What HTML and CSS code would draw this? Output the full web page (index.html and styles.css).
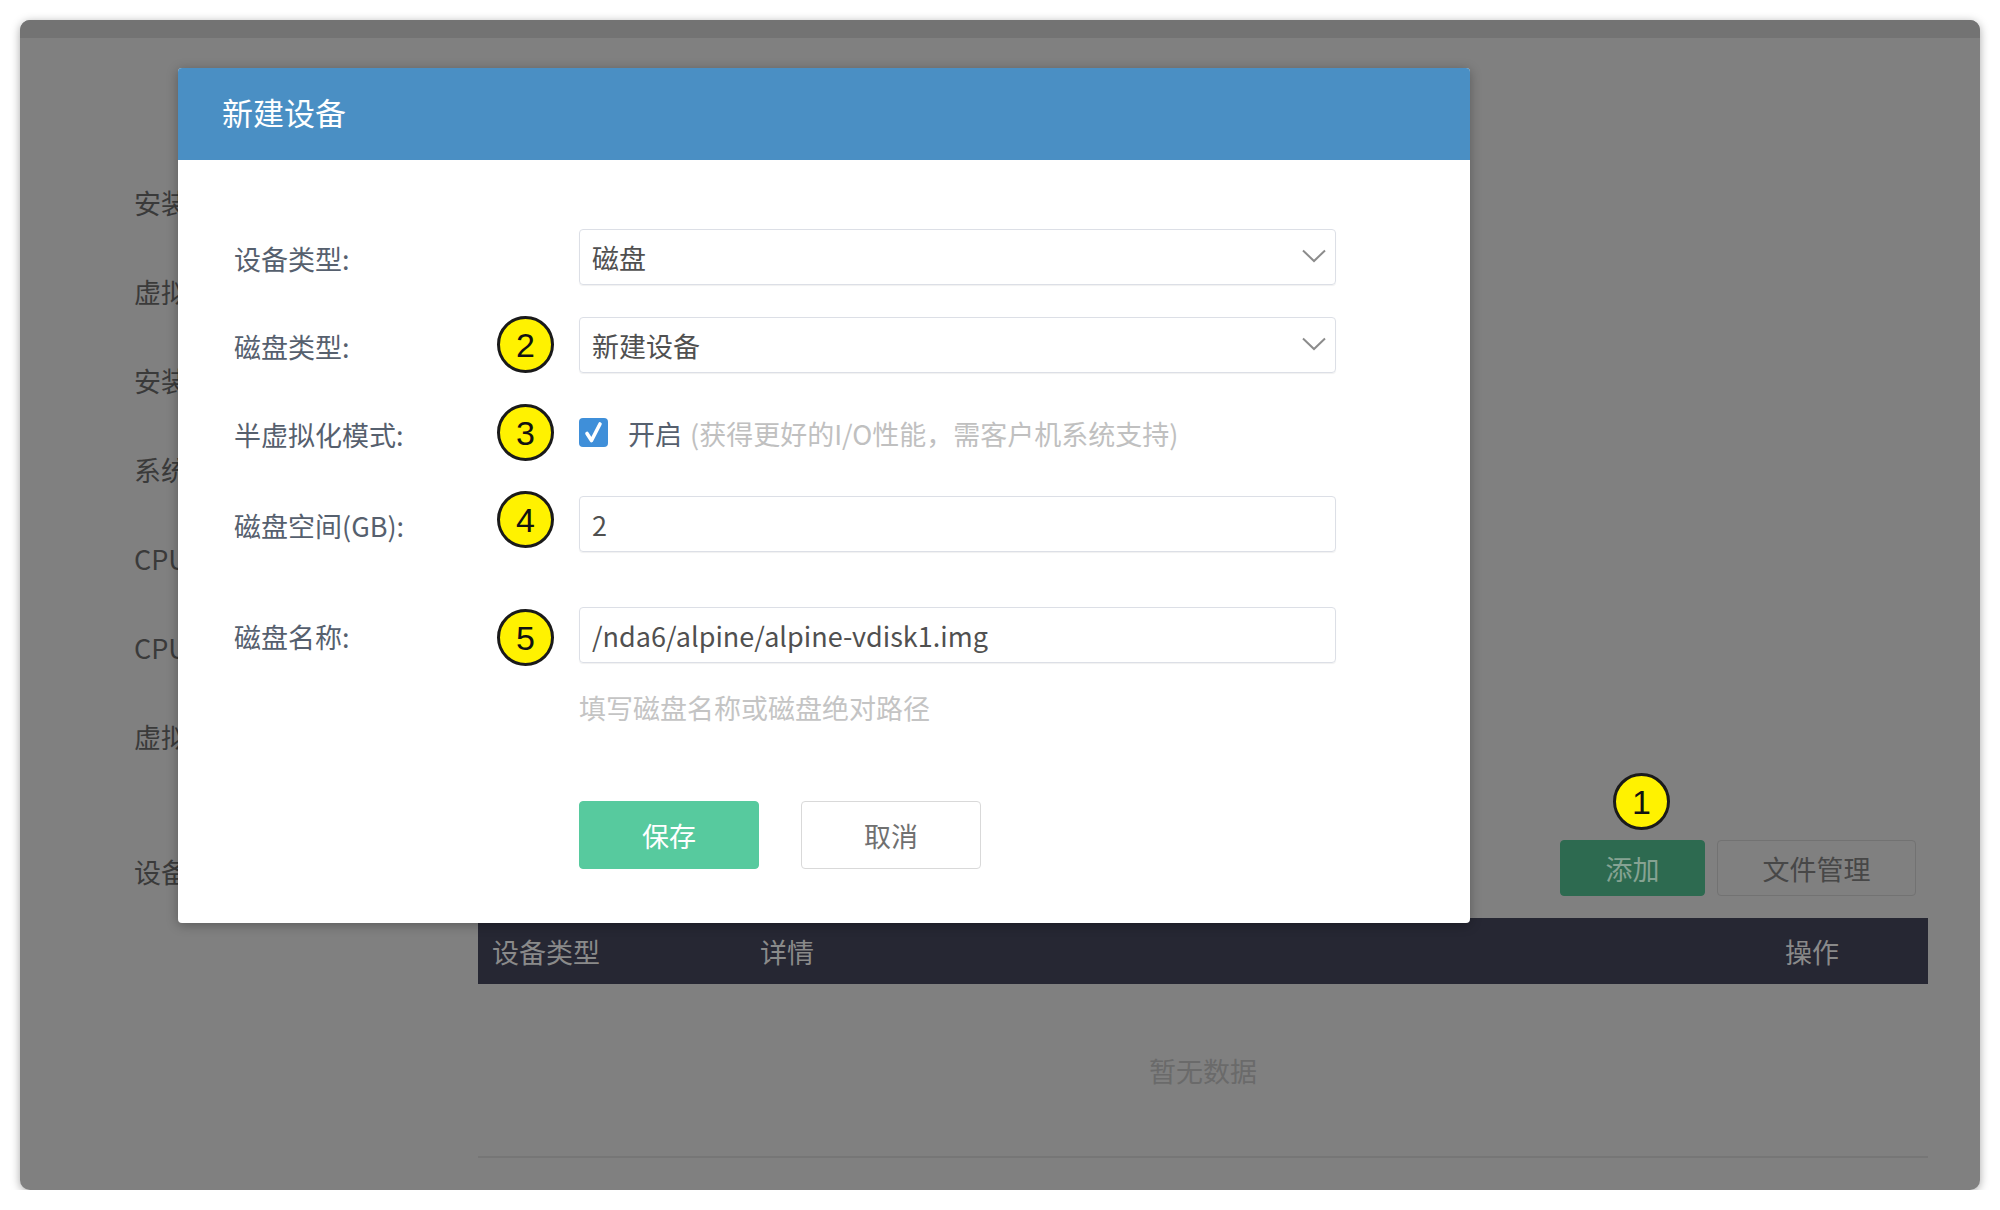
FILE: index.html
```html
<!DOCTYPE html>
<html lang="zh-CN">
<head>
<meta charset="utf-8">
<title>新建设备</title>
<link rel="stylesheet" href="styles.css">
</head>
<body>
<div class="window">
  <div class="titlebar"></div>
  <div class="page">
    <div class="bg-form">
      <div class="bg-row">安装</div>
      <div class="bg-row">虚拟</div>
      <div class="bg-row">安装</div>
      <div class="bg-row">系统</div>
      <div class="bg-row">CPU</div>
      <div class="bg-row">CPU</div>
      <div class="bg-row">虚拟</div>
    </div>
    <div class="devices">
      <div class="devices-label">设备</div>
      <div class="devices-main">
        <div class="toolbar">
          <button class="btn btn-add">添加</button>
          <button class="btn btn-files">文件管理</button>
        </div>
        <div class="table">
          <div class="thead">
            <div class="th th-type">设备类型</div>
            <div class="th th-detail">详情</div>
            <div class="th th-op">操作</div>
          </div>
          <div class="tbody">暂无数据</div>
        </div>
      </div>
    </div>
  </div>

  <div class="badge badge-1">1</div>

  <div class="modal">
    <div class="modal-header">新建设备</div>
    <div class="modal-body">
      <div class="form-row r1">
        <div class="label">设备类型:</div>
        <div class="control">
          <div class="select"><span>磁盘</span>
            <svg class="chev" width="24" height="14" viewBox="0 0 24 14"><path d="M1 1.5 L12 12 L23 1.5" fill="none" stroke="#8c8c8c" stroke-width="2"/></svg>
          </div>
        </div>
      </div>
      <div class="form-row r2">
        <div class="label">磁盘类型:</div>
        <div class="control">
          <div class="badge">2</div>
          <div class="select"><span>新建设备</span>
            <svg class="chev" width="24" height="14" viewBox="0 0 24 14"><path d="M1 1.5 L12 12 L23 1.5" fill="none" stroke="#8c8c8c" stroke-width="2"/></svg>
          </div>
        </div>
      </div>
      <div class="form-row r3">
        <div class="label">半虚拟化模式:</div>
        <div class="control check-line">
          <div class="badge">3</div>
          <span class="checkbox"><svg width="29" height="29" viewBox="0 0 29 29"><path d="M8 15.5 L12.5 22.5 L21 6" fill="none" stroke="#fff" stroke-width="3.6" stroke-linecap="round" stroke-linejoin="round"/></svg></span>
          <span class="check-text">开启</span>
          <span class="check-hint">(获得更好的I/O性能，需客户机系统支持)</span>
        </div>
      </div>
      <div class="form-row r4">
        <div class="label">磁盘空间(GB):</div>
        <div class="control">
          <div class="badge badge-up">4</div>
          <div class="input">2</div>
        </div>
      </div>
      <div class="form-row r5">
        <div class="label">磁盘名称:</div>
        <div class="control">
          <div class="badge badge-down">5</div>
          <div class="input">/nda6/alpine/alpine-vdisk1.img</div>
        </div>
      </div>
      <div class="form-hint">填写磁盘名称或磁盘绝对路径</div>
      <div class="form-actions">
        <button class="btn btn-save">保存</button>
        <button class="btn btn-cancel">取消</button>
      </div>
    </div>
  </div>
</div>
</body>
</html>
```
FILE: styles.css
```css
* { box-sizing: border-box; }
html, body {
  margin: 0;
  padding: 0;
  background: #ffffff;
}
body {
  font-family: "Noto Sans CJK SC", "Noto Sans", sans-serif;
  font-size: 27px;
}
.window {
  position: relative;
  margin: 20px 0 0 20px;
  width: 1960px;
  height: 1170px;
  border-radius: 10px;
  overflow: hidden;
  background: #808080;
  box-shadow: 0 2px 10px rgba(0, 0, 0, 0.35);
}
.titlebar {
  height: 18px;
  background: #737373;
}
.page {
  padding: 120px 52px 0 114px;
}
.bg-row {
  height: 89px;
  display: flex;
  align-items: center;
  color: #3a3a3a;
  white-space: nowrap;
}
.devices {
  margin-top: 59px;
  display: grid;
  grid-template-columns: 344px 1fr;
}
.devices-label {
  color: #3a3a3a;
  line-height: 56px;
  padding-top: 4px;
}
.toolbar {
  display: flex;
  justify-content: flex-end;
  gap: 12px;
  padding-right: 12px;
}
.btn {
  font-family: inherit;
  font-size: 27px;
  border-radius: 4px;
  cursor: pointer;
  padding: 0;
}
.btn-add {
  width: 145px;
  height: 56px;
  background: #2d6a50;
  border: 1px solid #2d6a50;
  color: #86a393;
}
.btn-files {
  width: 199px;
  height: 56px;
  background: #808080;
  border: 1px solid #727272;
  color: #474747;
}
.table {
  margin-top: 22px;
}
.thead {
  height: 66px;
  background: #262733;
  display: grid;
  grid-template-columns: 268px 1fr 157px;
  align-items: center;
  color: #8a8a8a;
}
.th {
  padding-left: 14px;
}
.tbody {
  height: 174px;
  border-bottom: 2px solid #767676;
  display: flex;
  align-items: center;
  justify-content: center;
  color: #6a6a6a;
}

/* annotation badges */
.badge {
  position: absolute;
  width: 57px;
  height: 57px;
  border-radius: 50%;
  border: 3px solid #1a1a1a;
  background: #fff200;
  display: flex;
  align-items: center;
  justify-content: center;
  font-family: "Liberation Sans", Arial, sans-serif;
  font-size: 34px;
  color: #111;
  line-height: 1;
}
.badge-1 {
  left: 1593px;
  top: 753px;
}
.control .badge {
  left: -82px;
  top: 50%;
  margin-top: -29px;
}
.control .badge-up { margin-top: -33px; }
.control .badge-down { margin-top: -26px; }

/* modal */
.modal {
  position: absolute;
  left: 158px;
  top: 48px;
  width: 1292px;
  height: 855px;
  background: #ffffff;
  border-radius: 4px;
  overflow: hidden;
  box-shadow: 0 2px 12px rgba(0, 0, 0, 0.3);
}
.modal-header {
  height: 92px;
  background: #4a8fc4;
  color: #ffffff;
  font-size: 31px;
  display: flex;
  align-items: center;
  padding: 0 0 6px 44px;
}
.modal-body {
  padding: 69px 0 54px 56px;
}
.form-row {
  display: grid;
  grid-template-columns: 345px 757px;
  height: 56px;
  align-items: center;
}
.r1, .r2 { margin-bottom: 32px; }
.r3 { margin-bottom: 35px; }
.r4 { margin-bottom: 55px; }
.label {
  color: #56606e;
  white-space: nowrap;
  padding-top: 2px;
}
.control {
  position: relative;
  height: 56px;
}
.select, .input {
  height: 56px;
  border: 1px solid #dcdfe6;
  border-radius: 4px;
  display: flex;
  align-items: center;
  padding: 0 9px 0 12px;
  color: #505050;
  box-shadow: 0 1px 1px rgba(0, 0, 0, 0.06);
}
.select span { flex: 1; }
.chev { display: block; margin-top: -2px; }
.check-line {
  display: flex;
  align-items: center;
}
.checkbox {
  width: 29px;
  height: 29px;
  border-radius: 4px;
  background: #3f8fd9;
  display: inline-flex;
  margin-right: 20px;
  margin-top: -2px;
}
.checkbox svg { display: block; }
.check-text {
  color: #56606e;
  margin-right: 8px;
}
.check-hint {
  color: #c0c0c0;
  white-space: nowrap;
}
.form-hint {
  margin: 28px 0 0 345px;
  line-height: 34px;
  color: #c4c4c4;
}
.form-actions {
  margin: 76px 0 0 345px;
  display: flex;
  gap: 42px;
}
.btn-save {
  width: 180px;
  height: 68px;
  background: #57ca9e;
  border: 1px solid #57ca9e;
  color: #ffffff;
}
.btn-cancel {
  width: 180px;
  height: 68px;
  background: #ffffff;
  border: 1px solid #d9d9d9;
  color: #707070;
}
```
